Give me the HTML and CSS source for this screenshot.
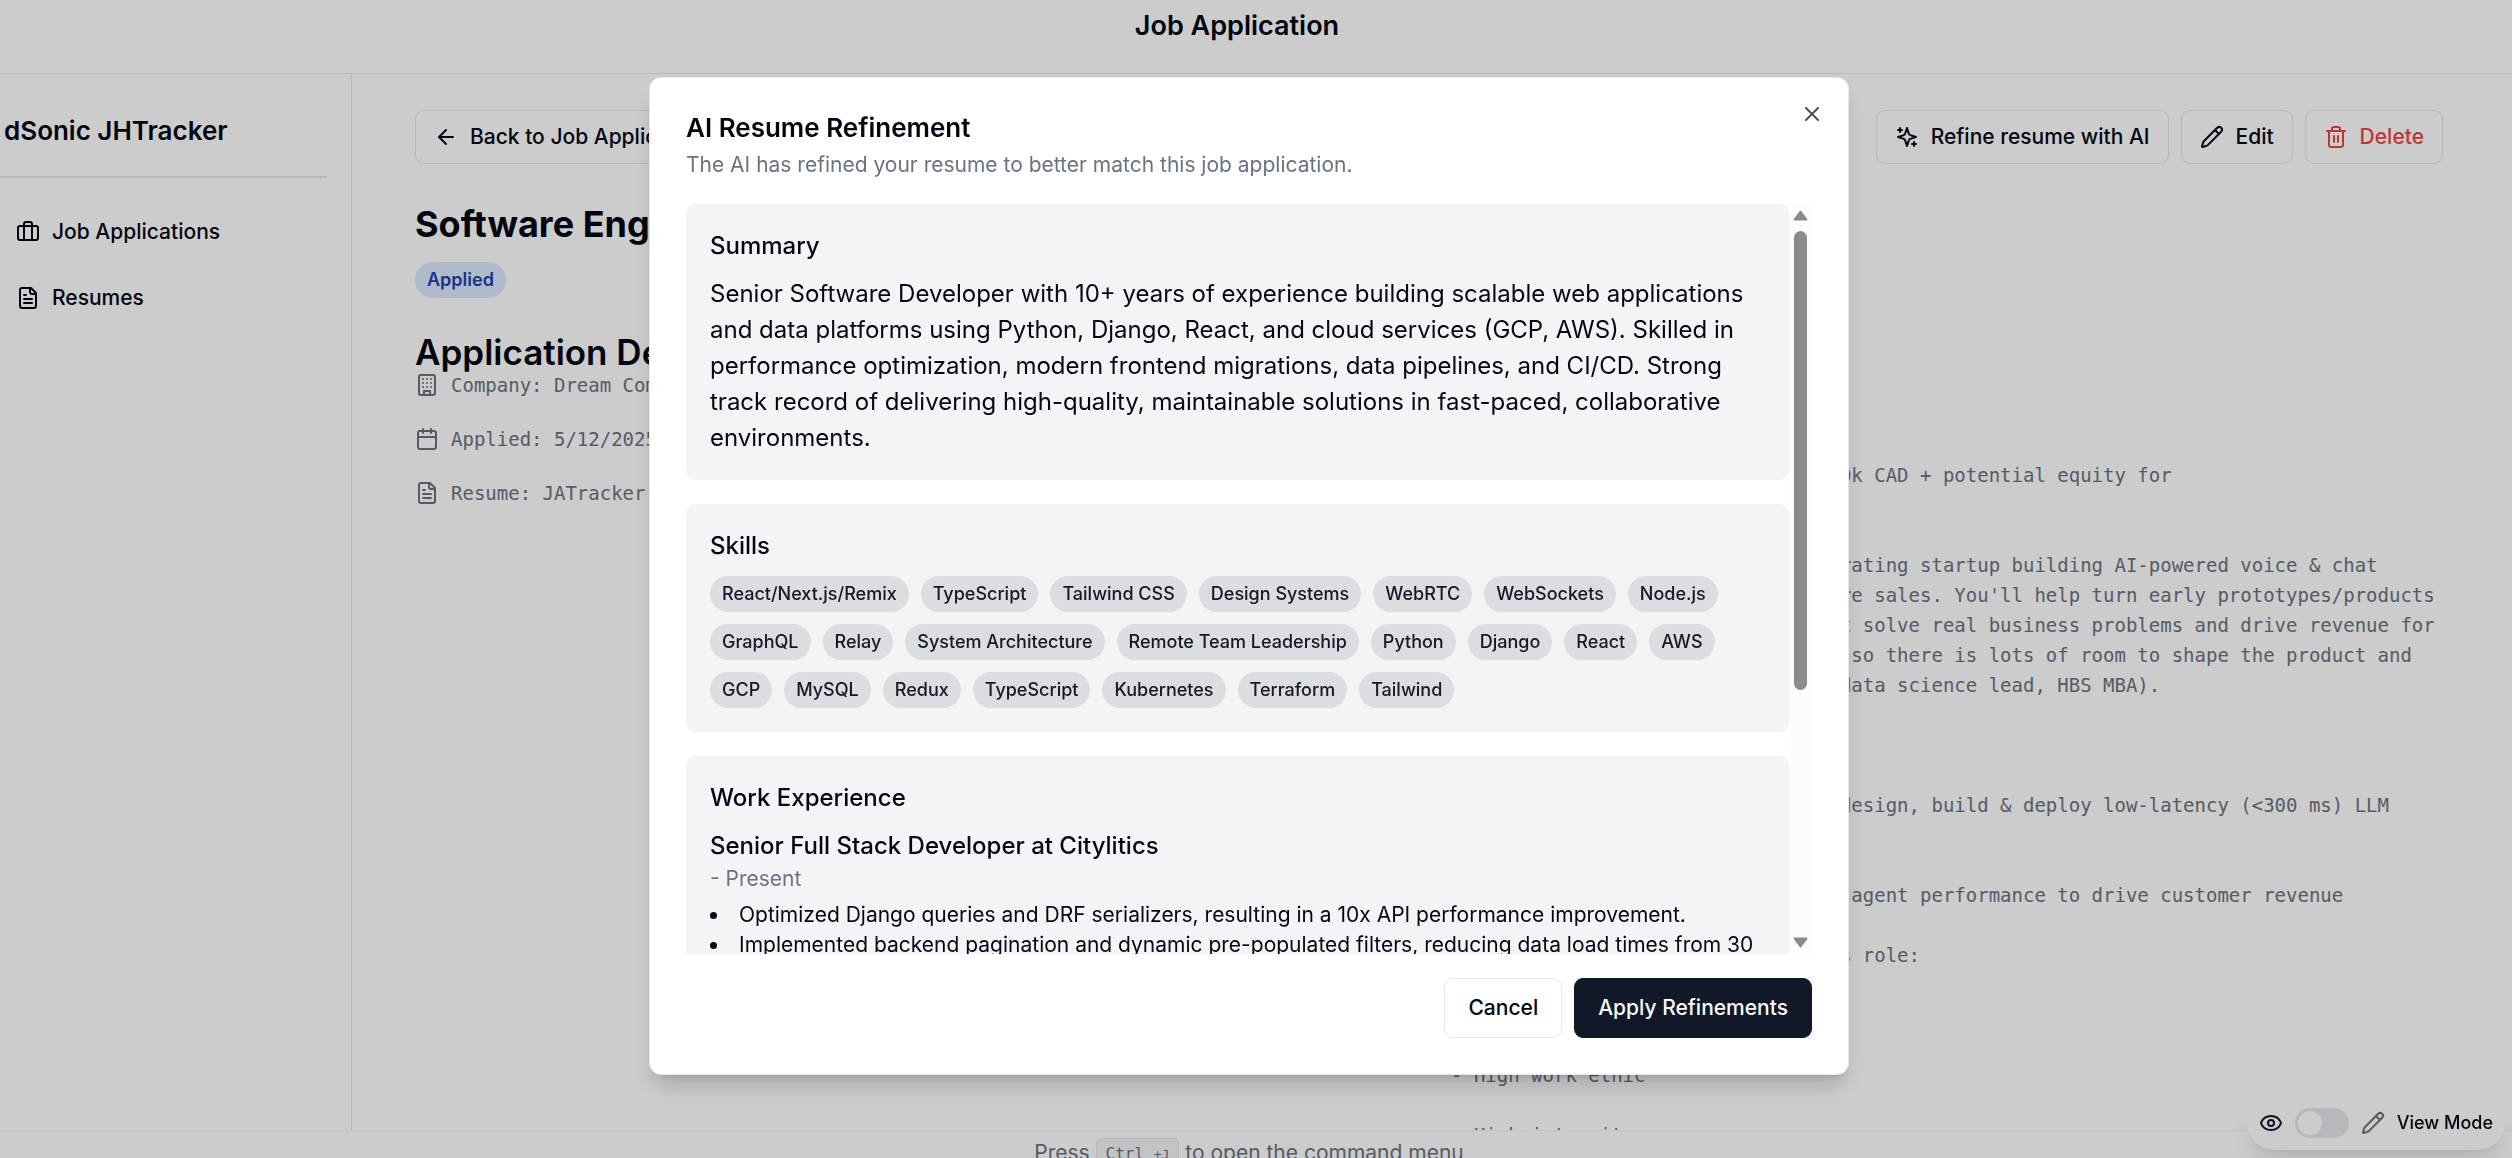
FILE: index.html
```html
<!DOCTYPE html>
<html lang="en">
<head>
<meta charset="utf-8">
<meta name="viewport" content="width=device-width, initial-scale=1">
<title>Job Application</title>
<link rel="stylesheet" href="styles.css">
</head>
<body>
<svg class="sprite" aria-hidden="true">
  <symbol id="i-briefcase" viewBox="0 0 24 24"><path d="M16 20V4a2 2 0 0 0-2-2h-4a2 2 0 0 0-2 2v16"/><rect width="20" height="14" x="2" y="6" rx="2"/></symbol>
  <symbol id="i-file" viewBox="0 0 24 24"><path d="M15 2H6a2 2 0 0 0-2 2v16a2 2 0 0 0 2 2h12a2 2 0 0 0 2-2V7Z"/><path d="M14 2v4a2 2 0 0 0 2 2h4"/><path d="M10 9H8"/><path d="M16 13H8"/><path d="M16 17H8"/></symbol>
  <symbol id="i-back" viewBox="0 0 24 24"><path d="m12 19-7-7 7-7"/><path d="M19 12H5"/></symbol>
  <symbol id="i-building" viewBox="0 0 24 24"><rect width="16" height="20" x="4" y="2" rx="2"/><path d="M9 22v-4h6v4"/><path d="M8 6h.01M16 6h.01M12 6h.01M12 10h.01M12 14h.01M16 10h.01M16 14h.01M8 10h.01M8 14h.01"/></symbol>
  <symbol id="i-calendar" viewBox="0 0 24 24"><path d="M8 2v4"/><path d="M16 2v4"/><rect width="18" height="18" x="3" y="4" rx="2"/><path d="M3 10h18"/></symbol>
  <symbol id="i-sparkles" viewBox="0 0 24 24"><path d="m12 3-1.9 5.8a2 2 0 0 1-1.3 1.3L3 12l5.8 1.9a2 2 0 0 1 1.3 1.3L12 21l1.9-5.8a2 2 0 0 1 1.3-1.3L21 12l-5.8-1.9a2 2 0 0 1-1.3-1.3Z"/><path d="M5 3v4"/><path d="M19 17v4"/><path d="M3 5h4"/><path d="M17 19h4"/></symbol>
  <symbol id="i-pencil" viewBox="0 0 24 24"><path d="M21.17 6.81a1 1 0 0 0-3.99-3.99L3.84 16.17a2 2 0 0 0-.5.83l-1.32 4.35a.5.5 0 0 0 .62.62l4.35-1.32a2 2 0 0 0 .83-.5z"/><path d="m15 5 4 4"/></symbol>
  <symbol id="i-trash" viewBox="0 0 24 24"><path d="M3 6h18"/><path d="M19 6v14c0 1-1 2-2 2H7c-1 0-2-1-2-2V6"/><path d="M8 6V4c0-1 1-2 2-2h4c1 0 2 1 2 2v2"/><path d="M10 11v6"/><path d="M14 11v6"/></symbol>
  <symbol id="i-eye" viewBox="0 0 24 24"><path d="M2.06 12.35a1 1 0 0 1 0-.7 10.75 10.75 0 0 1 19.88 0 1 1 0 0 1 0 .7 10.75 10.75 0 0 1-19.88 0"/><circle cx="12" cy="12" r="3"/></symbol>
  <symbol id="i-close" viewBox="0 0 24 24"><path d="M18 6 6 18"/><path d="m6 6 12 12"/></symbol>
</svg>

<div class="app">
  <header class="topbar"><h1 class="topbar-title">Job Application</h1></header>
  <div class="columns">
    <aside class="sidebar">
      <div class="brand">dSonic JHTracker</div>
      <nav class="nav">
        <a class="nav-link" href="#"><svg class="icon"><use href="#i-briefcase"/></svg>Job Applications</a>
        <a class="nav-link" href="#"><svg class="icon"><use href="#i-file"/></svg>Resumes</a>
      </nav>
    </aside>
    <main class="main">
      <div class="toolbar">
        <button class="btn btn-ghost btn-back" type="button"><svg class="icon"><use href="#i-back"/></svg>Back to Job Applications</button>
        <button class="btn btn-ghost" type="button"><svg class="icon"><use href="#i-sparkles"/></svg>Refine resume with AI</button>
        <button class="btn btn-ghost" type="button"><svg class="icon"><use href="#i-pencil"/></svg>Edit</button>
        <button class="btn btn-ghost btn-danger" type="button"><svg class="icon"><use href="#i-trash"/></svg>Delete</button>
      </div>
      <h2 class="job-title">Software Engineer</h2>
      <span class="status">Applied</span>
      <div class="details">
        <section>
          <h2 class="section-title">Application Details</h2>
          <ul class="facts">
            <li><svg class="icon"><use href="#i-building"/></svg>Company: Dream Company</li>
            <li><svg class="icon"><use href="#i-calendar"/></svg>Applied: 5/12/2025</li>
            <li><svg class="icon"><use href="#i-file"/></svg>Resume: JATracker Resume</li>
          </ul>
        </section>
        <section>
          <h2 class="section-title">Job Description</h2>
          <p class="description">Senior Software Engineer


Compensation range: CA$120k to $160k CAD + potential equity for
the right candidate.

We are a fast-growing revenue generating startup building AI-powered voice &amp; chat
agents for businesses that want more sales. You'll help turn early prototypes/products
into reliable production tools that solve real business problems and drive revenue for
our customers. We're a small team, so there is lots of room to shape the product and
culture (founders: ex-Google CTO, data science lead, HBS MBA).

What you will do:

- Own features from start to end: design, build &amp; deploy low-latency (&lt;300 ms) LLM
voice agents.

- Build evals which improve our AI agent performance to drive customer revenue

People who are a great fit for this role:

- Strong coding skills

- High work ethic

- High integrity</p>
        </section>
      </div>
    </main>
  </div>
  <footer class="hint">Press <kbd class="keys">Ctrl <small class="keys-small">+J</small></kbd> to open the command menu</footer>
</div>

<label class="mode">
  <svg class="icon mode-eye"><use href="#i-eye"/></svg>
  <input class="switch" type="checkbox" role="switch">
  <svg class="icon mode-pencil"><use href="#i-pencil"/></svg>
  <span>View Mode</span>
</label>

<div class="overlay">
  <div class="dialog" role="dialog" aria-modal="true" aria-labelledby="dialog-title">
    <button class="close" type="button" aria-label="Close"><svg class="icon"><use href="#i-close"/></svg></button>
    <h2 class="dialog-title" id="dialog-title">AI Resume Refinement</h2>
    <p class="dialog-text">The AI has refined your resume to better match this job application.</p>
    <div class="scroller">
      <div class="cards">
        <section class="card">
          <h3 class="card-title">Summary</h3>
          <p class="summary">Senior Software Developer with 10+ years of experience building scalable web applications and data platforms using Python, Django, React, and cloud services (GCP, AWS). Skilled in performance optimization, modern frontend migrations, data pipelines, and CI/CD. Strong track record of delivering high-quality, maintainable solutions in fast-paced, collaborative environments.</p>
        </section>
        <section class="card">
          <h3 class="card-title">Skills</h3>
          <ul class="skills">
            <li>React/Next.js/Remix</li><li>TypeScript</li><li>Tailwind CSS</li><li>Design Systems</li><li>WebRTC</li><li>WebSockets</li><li>Node.js</li><li>GraphQL</li><li>Relay</li><li>System Architecture</li><li>Remote Team Leadership</li><li>Python</li><li>Django</li><li>React</li><li>AWS</li><li>GCP</li><li>MySQL</li><li>Redux</li><li>TypeScript</li><li>Kubernetes</li><li>Terraform</li><li>Tailwind</li>
          </ul>
        </section>
        <section class="card">
          <h3 class="card-title">Work Experience</h3>
          <h4 class="job">Senior Full Stack Developer at Citylitics</h4>
          <p class="dates">- Present</p>
          <ul class="bullets">
            <li>Optimized Django queries and DRF serializers, resulting in a 10x API performance improvement.</li>
            <li>Implemented backend pagination and dynamic pre-populated filters, reducing data load times from 30 seconds to 3 seconds.</li>
          </ul>
        </section>
      </div>
      <div class="scrollbar" aria-hidden="true">
        <svg class="arrow" viewBox="0 0 15 11"><path d="M7.500 1.500 13.500 9.500H1.500Z"/></svg>
        <div class="track"><div class="thumb"></div></div>
        <svg class="arrow" viewBox="0 0 15 11"><path d="M7.500 9.500 1.500 1.500H13.500Z"/></svg>
      </div>
    </div>
    <div class="actions">
      <button class="btn btn-outline" type="button">Cancel</button>
      <button class="btn btn-primary" type="button">Apply Refinements</button>
    </div>
  </div>
</div>
</body>
</html>
```

FILE: styles.css
```css
:root {
  --ink: #030712;
  --muted: #6b7280;
  --line: #e5e7eb;
  --navy: #111827;
  --sans: Inter, "Liberation Sans", sans-serif;
  --mono: "DejaVu Sans Mono", "Liberation Mono", monospace;
}

* { box-sizing: border-box; }

body,
h1, h2, h3, h4, p, ul {
  margin: 0;
  padding: 0;
}

ul { list-style: none; }

body {
  font: 400 21px/30px var(--sans);
  color: var(--ink);
  background: #fff;
  overflow: hidden;
}

.sprite { display: none; }

.icon {
  flex: none;
  width: 24px;
  height: 24px;
  fill: none;
  stroke: currentColor;
  stroke-width: 2;
  stroke-linecap: round;
  stroke-linejoin: round;
}

/* Page shell */
.app {
  display: flex;
  flex-direction: column;
  height: 100vh;
}

.topbar {
  flex: none;
  height: 74px;
  padding: 8px 38px 0 0;
  border-bottom: 1px solid var(--line);
  text-align: center;
}

.topbar-title {
  font-size: 27px;
  font-weight: 600;
  line-height: 36px;
}

.columns {
  flex: 1;
  display: grid;
  grid-template-columns: 352px 1fr;
  min-height: 0;
}

.sidebar {
  padding: 36px 24px 0 0;
  border-right: 1px solid var(--line);
}

.brand {
  padding: 0 0 24px 4px;
  border-bottom: 2px solid var(--line);
  font-size: 26px;
  font-weight: 600;
  line-height: 42px;
}

.nav {
  display: grid;
  gap: 18px;
  padding-top: 30px;
}

.nav-link {
  display: flex;
  align-items: center;
  gap: 12px;
  height: 48px;
  padding-left: 16px;
  color: inherit;
  font-weight: 500;
  text-decoration: none;
}

.main {
  min-width: 0;
  padding: 36px 69px 0 63px;
  overflow: hidden;
}

.toolbar {
  display: flex;
  gap: 12px;
}

.btn {
  display: inline-flex;
  align-items: center;
  gap: 12px;
  height: 60px;
  padding: 0 23px;
  border: 1px solid var(--line);
  border-radius: 9px;
  background: #fff;
  color: inherit;
  font: 500 21px/30px var(--sans);
  white-space: nowrap;
}

.btn-ghost {
  height: 54px;
  padding: 0 18px;
}

.btn-back { margin-right: auto; }

.btn-danger { color: #ef4444; }

.btn-primary {
  border-color: var(--navy);
  background: var(--navy);
  color: #f9fafb;
}

.job-title {
  margin: 36px 0 14px;
  font-size: 36px;
  font-weight: 700;
  line-height: 48px;
}

.status {
  display: block;
  width: fit-content;
  padding: 3px 12px;
  border-radius: 18px;
  background: #dbeafe;
  color: #1e40af;
  font-size: 18px;
  font-weight: 600;
}

.details {
  display: grid;
  grid-template-columns: 1fr 1fr;
  gap: 44px;
  margin-top: 36px;
  color: var(--muted);
  font: 19px/30px var(--mono);
}

.section-title {
  color: var(--ink);
  font: 600 35px/36px var(--sans);
}

.facts {
  display: grid;
  gap: 24px;
}

.facts li {
  display: flex;
  align-items: center;
  gap: 12px;
}

.description { white-space: pre; }

.hint {
  flex: none;
  height: 28px;
  padding: 7px 14px 0 0;
  border-top: 1px solid #f3f4f6;
  overflow: hidden;
  color: var(--muted);
  text-align: center;
}

.keys {
  display: inline-block;
  height: 30px;
  padding: 0 9px;
  border: 1px solid var(--line);
  border-radius: 6px;
  background: #f3f4f6;
  font: 16px/30px var(--mono);
  vertical-align: top;
}

.keys-small { font-size: 13px; }

/* Floating view/edit switch */
.mode {
  position: fixed;
  right: 7px;
  bottom: 8px;
  display: flex;
  align-items: center;
  gap: 12px;
  height: 54px;
  padding: 0 12px;
  border-radius: 27px;
  background: #fff;
  box-shadow: 0 15px 22px -4px rgba(0, 0, 0, .1), 0 6px 9px -6px rgba(0, 0, 0, .1);
  font-size: 18px;
  font-weight: 500;
}

.mode-eye { color: var(--navy); }
.mode-pencil { color: var(--muted); }

.switch {
  appearance: none;
  width: 54px;
  height: 30px;
  margin: 0;
  padding: 3px;
  border-radius: 15px;
  background: var(--line);
}

.switch::before {
  content: "";
  display: block;
  width: 24px;
  height: 24px;
  border-radius: 50%;
  background: #fff;
}

/* Modal */
.overlay {
  position: fixed;
  inset: 0;
  display: grid;
  place-items: center;
  padding: 0 14px 6px 0;
  background: rgba(0, 0, 0, .2);
}

.dialog {
  position: relative;
  width: 1200px;
  max-width: 100%;
  padding: 36px;
  border: 1px solid var(--line);
  border-radius: 12px;
  background: #fff;
  box-shadow: 0 15px 22px -4px rgba(0, 0, 0, .16), 0 6px 9px -6px rgba(0, 0, 0, .16);
}

.close {
  position: absolute;
  top: 24px;
  right: 24px;
  display: flex;
  padding: 0;
  border: 0;
  background: none;
  color: inherit;
  opacity: .7;
}

.dialog-title {
  margin-bottom: 9px;
  font-size: 26px;
  font-weight: 600;
  line-height: 27px;
}

.dialog-text { color: var(--muted); }

.scroller {
  display: flex;
  max-height: 750px;
  margin: 24px 0;
  overflow: hidden;
}

.cards {
  flex: 1;
  display: flex;
  flex-direction: column;
  gap: 24px;
}

.card {
  flex: none;
  padding: 24px;
  border-radius: 9px;
  background: #f3f4f6;
}

.card-title {
  margin-bottom: 12px;
  font-size: 24px;
  font-weight: 500;
  line-height: 36px;
}

.summary {
  font-size: 24px;
  line-height: 36px;
}

.skills {
  display: flex;
  flex-wrap: wrap;
  gap: 12px;
}

.skills li {
  padding: 3px 12px;
  border-radius: 18px;
  background: #dcdde1;
  color: var(--navy);
  font-size: 18px;
  font-weight: 500;
}

.job {
  font-size: 24px;
  font-weight: 500;
  line-height: 36px;
}

.dates {
  margin-bottom: 6px;
  color: var(--muted);
}

.bullets { list-style: disc inside; }

.scrollbar {
  flex: none;
  display: flex;
  flex-direction: column;
  align-items: center;
  gap: 10px;
  width: 23px;
  padding: 6px 0;
  background: #fcfcfc;
}

.arrow {
  flex: none;
  width: 15px;
  height: 11px;
  fill: #8b8b8b;
  stroke: #8b8b8b;
  stroke-width: 2;
  stroke-linejoin: round;
}

.track {
  flex: 1;
  width: 13px;
}

.thumb {
  height: 66%;
  border-radius: 7px;
  background: #8b8b8b;
}

.actions {
  display: flex;
  justify-content: flex-end;
  gap: 12px;
}
```
